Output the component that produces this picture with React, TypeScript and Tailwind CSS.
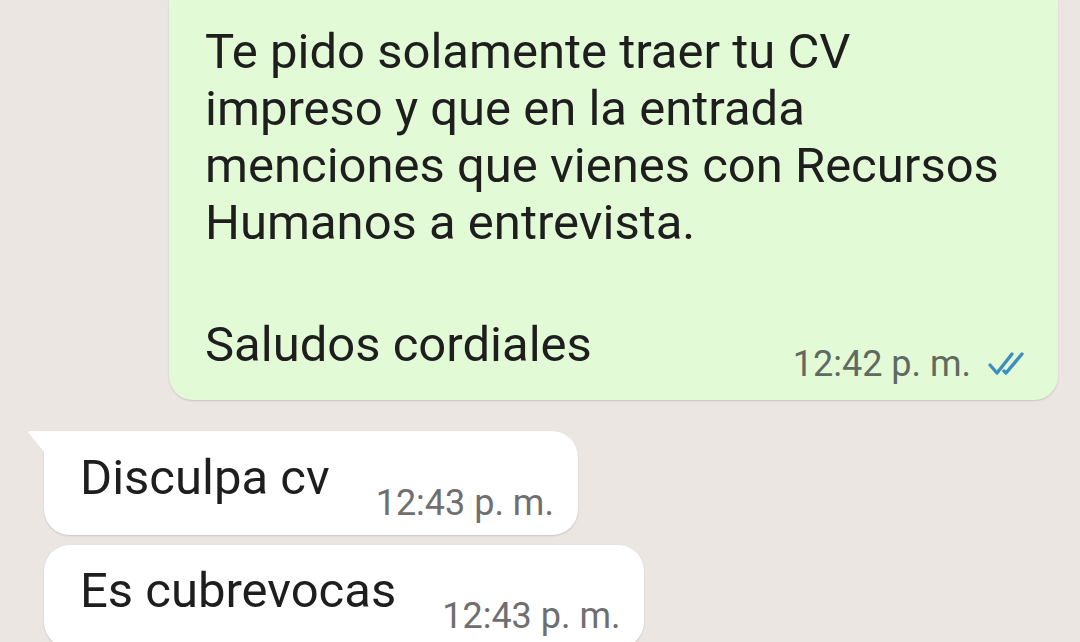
import React from 'react';

const font = { fontFamily: 'Roboto, "Noto Sans", sans-serif' };

const DoubleCheck = () => (
  <svg width="46" height="26" viewBox="0 0 46 26" fill="none">
    <path d="M4 14 L11 22 L26 3" stroke="#3d8fbf" strokeWidth="3.4" strokeLinecap="round" strokeLinejoin="round" />
    <path d="M18 20 L20 22 L36 3" stroke="#3d8fbf" strokeWidth="3.4" strokeLinecap="round" strokeLinejoin="round" />
  </svg>
);

const Incoming = ({ text, time, tail, pad }: { text: string; time: string; tail?: boolean; pad: string }) => (
  <div className={`relative ml-[44px] flex items-end bg-white rounded-[26px] shadow-[0_1px_2px_rgba(0,0,0,0.15)] pl-[36px] pr-[24px] w-fit ${pad} ${tail ? 'rounded-tl-none' : ''}`}>
    {tail && (
      <svg className="absolute -left-[17px] top-0" width="18" height="22" viewBox="0 0 18 22">
        <path d="M18 0 L3 0 Q0 0 2 2.5 L18 22 Z" fill="#ffffff" />
      </svg>
    )}
    <span className="text-[49px] leading-[57px] text-[#1e1e1e] mb-[15px]">{text}</span>
    <span className="text-[36px] leading-[36px] text-[#6f6f6f] ml-[46px]">{time}</span>
  </div>
);

export default function App() {
  return (
    <div className="w-[1080px] h-[642px] overflow-hidden bg-[#ece6e2] flex flex-col" style={font}>
      <div className="h-[5px] bg-black" />
      <div className="ml-[169px] mr-[22px] bg-[#e3fad7] rounded-b-[24px] shadow-[0_1px_2px_rgba(0,0,0,0.15)] pl-[36px] pr-[26px] pt-[23px] pb-[18px]">
        <p className="text-[49px] leading-[57px] text-[#1e1e1e]">
          Te pido solamente traer tu CV<br />
          impreso y que en la entrada<br />
          menciones que vienes con Recursos<br />
          Humanos a entrevista.
        </p>
        <div className="flex items-end justify-between mt-[65px]">
          <span className="text-[49px] leading-[57px] text-[#1e1e1e] mb-[9px]">Saludos cordiales</span>
          <div className="flex items-center gap-[15px]">
            <span className="text-[36px] leading-[36px] text-[#5f6a62]">12:42 p. m.</span>
            <DoubleCheck />
          </div>
        </div>
      </div>
      <div className="flex flex-col gap-[10px] mt-[31px]">
        <Incoming text="Disculpa cv" time="12:43 p. m." tail pad="pt-[18px] pb-[14px]" />
        <Incoming text="Es cubrevocas" time="12:43 p. m." pad="pt-[17px] pb-[14px]" />
      </div>
    </div>
  );
}
